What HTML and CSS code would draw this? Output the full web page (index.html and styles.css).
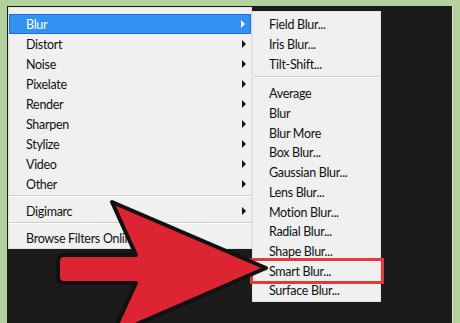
FILE: index.html
```html
<!DOCTYPE html>
<html lang="en">
<head>
  <meta charset="UTF-8">
  <title>Filter Menu - Blur</title>
  <link rel="stylesheet" href="styles.css">
</head>
<body>
  <div class="screen">
    <div class="menus">
      <ul class="menu">
        <li class="item sub active">Blur</li>
        <li class="item sub">Distort</li>
        <li class="item sub">Noise</li>
        <li class="item sub">Pixelate</li>
        <li class="item sub">Render</li>
        <li class="item sub">Sharpen</li>
        <li class="item sub">Stylize</li>
        <li class="item sub">Video</li>
        <li class="item sub">Other</li>
        <li class="sep"></li>
        <li class="item sub">Digimarc</li>
        <li class="sep"></li>
        <li class="item">Browse Filters Online...</li>
      </ul>

      <ul class="menu submenu">
        <li class="item">Field Blur...</li>
        <li class="item">Iris Blur...</li>
        <li class="item">Tilt-Shift...</li>
        <li class="sep"></li>
        <li class="item">Average</li>
        <li class="item">Blur</li>
        <li class="item">Blur More</li>
        <li class="item">Box Blur...</li>
        <li class="item">Gaussian Blur...</li>
        <li class="item">Lens Blur...</li>
        <li class="item">Motion Blur...</li>
        <li class="item">Radial Blur...</li>
        <li class="item">Shape Blur...</li>
        <li class="item marked">Smart Blur...</li>
        <li class="item">Surface Blur...</li>
      </ul>
    </div>
  </div>

  <!-- big pointer arrow drawn over the menus -->
  <svg class="pointer" width="460" height="323" viewBox="0 0 460 323">
    <path d="M64,255 L136,255 L112,202 L266,268 L112,335 L136,283 L64,283 Q58,283 58,277 L58,261 Q58,255 64,255 Z"
          fill="#dc2432" stroke="#111" stroke-width="4" stroke-linejoin="round"/>
  </svg>
</body>
</html>
```

FILE: styles.css
```css
body {
  margin: 0;
  width: 460px;
  height: 323px;
  overflow: hidden;
  background: #b4d09c;
  font-family: Lato, 'Open Sans', sans-serif;
  font-size: 12.5px;
  letter-spacing: -0.3px;
  color: #111;
}

.screen {
  margin: 6px 7px 0 7px;
  height: 317px;
  padding: 1px 0 0 1px;
  background: #1b1b1b;
  border-right: 1px solid #dfe6d6;
}

.menus {
  display: flex;
  align-items: flex-start;
}

.menu {
  list-style: none;
  margin: 0;
  padding: 6px 0 0 0;
  width: 244px;
  box-sizing: border-box;
  background: #f0f0f0;
  border: 1px solid #e2e2e2;
}

.item {
  height: 20px;
  box-sizing: border-box;
  padding: 0 5px 0 17px;
  display: flex;
  align-items: center;
  justify-content: space-between;
  white-space: nowrap;
  overflow: hidden;
}

.item.sub::after {
  content: "";
  border-left: 4px solid #111;
  border-top: 4px solid transparent;
  border-bottom: 4px solid transparent;
}

.item.active {
  background: #3391f3;
  border: 1px solid #1d6fd4;
  padding-left: 16px;
  color: #fff;
}

.item.active::after {
  border-left-color: #fff;
}

.sep {
  height: 1px;
  margin: 1px 0 4px 0;
  background: #cfcfcf;
  border-bottom: 1px solid #fff;
}

.submenu {
  width: 129px;
  margin-top: 4px;
  padding-top: 3px;
}

.submenu .item {
  height: 19.7px;
  padding-left: 16px;
}

.submenu .sep {
  margin: 2px 1px 6px 1px;
}

.item.marked {
  outline: 3px solid #e23a3c;
  outline-offset: 0;
  margin-right: -1px;
}

.pointer {
  position: absolute;
  left: 0;
  top: 0;
  pointer-events: none;
}
```
